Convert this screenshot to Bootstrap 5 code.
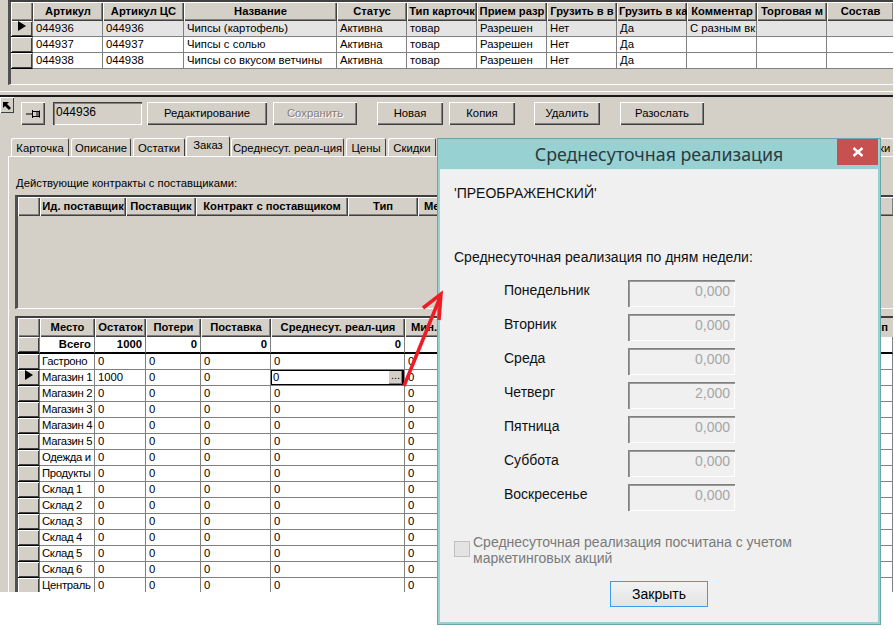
<!DOCTYPE html>
<html lang="ru">
<head>
  <meta charset="utf-8">
  <title>Среднесуточная реализация</title>
  <link href="https://cdn.jsdelivr.net/npm/bootstrap@5.3.0/dist/css/bootstrap.min.css" rel="stylesheet">
  <style>
    html, body { height: 629px; overflow: hidden; background: #fff; }
    body { position: relative; font-family: "Liberation Sans", Arial, sans-serif; font-size: 11.3px; color: #000; }
    .app-win { width: 893px; height: 592px; background: #d4d0c8; overflow: hidden; }

    /* grids */
    .grid-frame { overflow: hidden; border-top: 2px solid #404040; border-left: 3px solid #505050; border-bottom: 1px solid #fff; }
    .frame-top { height: 85px; margin-left: 8px; }
    .frame-contracts { height: 114px; margin: 0 0 0 6px; }
    .frame-stock { height: 276px; margin: 7px 0 0 6px; border-bottom: 0; }
    .table.dbgrid { table-layout: fixed; width: auto; border-collapse: separate; border-spacing: 0; margin: 0; --bs-table-bg: transparent; }
    .table.dbgrid th, .table.dbgrid td { padding: 0 0 0 3px; height: 16px; line-height: 15px; font-size: 11.3px; white-space: nowrap; overflow: hidden; color: #000; border: 0; }
    .table.dbgrid td { background: #fff; border-right: 1px solid #808080; border-bottom: 1px solid #808080; }
    .table.dbgrid th { height: 19px; padding: 0 2px 2px; font-size: 11.2px; background: #d4d0c8; text-align: center; font-weight: 700; box-shadow: inset 1px 1px 0 #fff, inset -1px -1px 0 #404040, inset -2px -2px 0 #808080; }
    .table.dbgrid td.ind-cell { background: #d4d0c8; padding: 0; box-shadow: inset 1px 1px 0 #fff, inset -1px -1px 0 #404040; border: 0; border-bottom: 1px solid #000; border-right: 1px solid #808080; }
    .table.dbgrid td.place-cell { padding-left: 2px; letter-spacing: -.3px; }
    .table.dbgrid tr.row-cur td:not(.ind-cell) { background: #e4e4e4; }
    .table.dbgrid tr.row-sum td { height: 17px; font-weight: 700; text-align: right; padding-right: 3px; border-bottom: 2px solid #000; }
    .table.dbgrid th.head-left { text-align: left; padding-left: 6px; }
    .table.dbgrid th.head-end { text-align: right; padding-right: 5px; box-shadow: none; }
    .cur-mark { display: block; width: 0; height: 0; margin: 0 0 0 7px; border-left: 8px solid #000; border-top: 5px solid transparent; border-bottom: 5px solid transparent; }
    .table.dbgrid td.edit-cell { padding: 0; }
    .edit-box { height: 15px; border: 1px solid #000; border-width: 1px 2px 1px 1px; padding-left: 1px; line-height: 13px; }
    .edit-dots { width: 13px; height: 13px; background: #d4d0c8; line-height: 9px; text-align: center; font-size: 11px; box-shadow: inset -1px -1px 0 #808080; }

    /* splitter + toolbar */
    .split-bar { height: 12px; border-bottom: 2px solid #1a1a1a; }
    .split-bar > div { height: 7px; border-bottom: 1px solid #fff; }
    .tool-row { height: 39px; }
    .btn.win-btn { height: 23px; padding: 0; background: #d4d0c8; border: 0; border-radius: 0; color: #000; font-size: 11.3px; line-height: 21px; box-shadow: inset 1px 1px 0 #fff, inset -1px -1px 0 #404040, inset -2px -2px 0 #808080; }
    .btn.win-btn:disabled { opacity: 1; color: #808080; text-shadow: 1px 1px 0 #fff; background: #d4d0c8; }
    .corner-btn { width: 14px; height: 16px; padding-left: 2px; box-shadow: inset 1px 1px 0 #fff, inset -1px -1px 0 #404040; }
    .btn.b-pin { width: 24px; margin: 5px 0 0 7px; }
    .id-field { width: 89px; height: 23px; margin: 5px 0 0 8px; padding: 3px 0 0 3px; line-height: 15px; font-size: 12px; box-shadow: inset 1px 1px 0 #404040, inset 2px 2px 0 #808080, inset -1px -1px 0 #fff; }
    .btn.b-edit { width: 120px; margin: 5px 0 0 5px; }
    .btn.b-save { width: 84px; margin: 5px 0 0 6px; }
    .btn.b-new { width: 66px; margin: 5px 0 0 20px; }
    .btn.b-copy { width: 66px; margin: 5px 0 0 6px; }
    .btn.b-del { width: 66px; margin: 5px 0 0 19px; }
    .btn.b-send { width: 84px; margin: 5px 0 0 20px; }

    /* tabs */
    .nav.tab-strip { height: 20px; padding-left: 11px; flex-wrap: nowrap; align-items: flex-end; gap: 2px; }
    .tab-item { height: 18px; padding: 3px 0 0; text-align: center; line-height: 15px; color: #000; white-space: nowrap; box-shadow: inset 1px 1px 0 #fff, inset -1px 0 0 #404040; border-radius: 2px 2px 0 0; }
    .tab-item.tab-on { height: 20px; padding-top: 2px; margin: 0 -1px 0 -1px; }
    .tab-w1 { width: 58px; } .tab-w2 { width: 60px; } .tab-w3 { width: 52px; } .tab-w4 { width: 44px; }
    .tab-w5 { width: 113px; } .tab-w6 { width: 40px; } .tab-w7 { width: 48px; }
    .tab-tail { width: 14px; margin-left: auto; text-align: left; box-shadow: inset 0 1px 0 #fff; }
    .tab-page { height: 436px; margin-left: 8px; border-top: 1px solid #fff; border-left: 1px solid #fff; }
    .page-title { height: 38px; padding: 18px 0 0 7px; line-height: 16px; }

    /* dialog */
    .dlg-win { position: absolute; left: 437px; top: 138px; width: 444px; height: 487px; background: #97d1d2; border: 1px solid #6aa6a8; font-family: "Liberation Sans", Arial, sans-serif; }
    .dlg-head { height: 30px; font-family: "Noto Sans", sans-serif; font-size: 17.8px; line-height: 30px; text-align: center; color: #2b3b40; }
    .dlg-close { position: absolute; right: 2px; top: 0; width: 41px; height: 26px; background: #c75050; }
    .dlg-close svg { display: block; margin: 8px auto 0; }
    .dlg-body { height: 453px; margin: 0 2px 0 2px; background: #f0f0f0; border-top: 1px solid #dff0f0; padding: 15px 0 0 14px; font-size: 14px; line-height: 16px; color: #111; }
    .dlg-sub { margin-top: 48px; margin-bottom: 15px; }
    .day-row { height: 34px; padding-left: 50px; }
    .day-name { width: 124px; padding-top: 2px; }
    .day-val { width: 107px; height: 27px; padding: 3px 5px 0 0; text-align: right; color: #a6a6a6; box-shadow: inset 1px 1px 0 #808080, inset 2px 2px 0 #9a9a9a, inset -1px -1px 0 #fff; }
    .promo-row { margin-top: 16px; color: #7a7a7a; }
    .promo-box { width: 16px; height: 16px; margin: 7px 3px 0 0; background: #e3e3e3; border: 1px solid #c0c0c0; flex: none; }
    .close-line { padding-right: 14px; }
    .btn.close-btn { width: 98px; height: 26px; padding: 0; margin-top: 15px; border: 1px solid #3c9cf0; border-radius: 0; background: linear-gradient(#f2f2f2, #e4e4e4); color: #000; font-size: 14px; line-height: 24px; }
    .note-arrow { position: absolute; left: 395px; top: 285px; pointer-events: none; }
  </style>
</head>
<body>
  <div class="app-win">
    <div class="grid-frame frame-top" id="grid-top"></div>
    <div class="split-bar"><div></div></div>

    <div class="tool-row d-flex align-items-start">
      <div class="corner-btn">
        <svg width="10" height="10" viewBox="0 0 10 10"><path d="M1 1h6L5 3l4 4-2 2-4-4-2 2z" fill="#000"/></svg>
      </div>
      <button class="btn win-btn b-pin d-flex align-items-center justify-content-center">
        <svg width="16" height="12" viewBox="0 0 16 12"><path d="M1 6h6M7.500 2v8M8 3.500h6v5H8M12 3.500v5M14.500 2.500v7" fill="none" stroke="#000"/></svg>
      </button>
      <div class="id-field">044936</div>
      <button class="btn win-btn b-edit">Редактирование</button>
      <button class="btn win-btn b-save" disabled>Сохранить</button>
      <button class="btn win-btn b-new">Новая</button>
      <button class="btn win-btn b-copy">Копия</button>
      <button class="btn win-btn b-del">Удалить</button>
      <button class="btn win-btn b-send">Разослать</button>
    </div>

    <ul class="nav tab-strip">
      <li class="tab-item tab-w1">Карточка</li>
      <li class="tab-item tab-w2">Описание</li>
      <li class="tab-item tab-w3">Остатки</li>
      <li class="tab-item tab-w4 tab-on">Заказ</li>
      <li class="tab-item tab-w5">Среднесут. реал-ция</li>
      <li class="tab-item tab-w6">Цены</li>
      <li class="tab-item tab-w7">Скидки</li>
      <li class="tab-item tab-tail">ки</li>
    </ul>

    <div class="tab-page">
      <div class="page-title">Действующие контракты с поставщиками:</div>
      <div class="grid-frame frame-contracts" id="grid-contracts"></div>
      <div class="grid-frame frame-stock" id="grid-stock"></div>
    </div>
  </div>

  <div class="dlg-win">
    <div class="dlg-head">Среднесуточная реализация</div>
    <div class="dlg-close">
      <svg width="12" height="10" viewBox="0 0 12 10"><path d="M1.500 1l9 8M10.500 1l-9 8" stroke="#fff" stroke-width="2.400" fill="none"/></svg>
    </div>
    <div class="dlg-body">
      <div>'ПРЕОБРАЖЕНСКИЙ'</div>
      <div class="dlg-sub">Среднесуточная реализация по дням недели:</div>
      <div id="day-list"></div>
      <div class="promo-row d-flex">
        <div class="promo-box"></div>
        <div>Среднесуточная реализация посчитана с учетом<br>маркетинговых акций</div>
      </div>
      <div class="d-flex justify-content-center close-line">
        <button class="btn close-btn">Закрыть</button>
      </div>
    </div>
  </div>

  <svg class="note-arrow" width="60" height="110" viewBox="395 285 60 110">
    <path d="M404 386L441 295M423 308L441 294L439 320" fill="none" stroke="#ee1c25" stroke-width="3.500"/>
  </svg>

  <script src="https://cdn.jsdelivr.net/npm/bootstrap@5.3.0/dist/js/bootstrap.bundle.min.js"></script>
  <script>
    // column widths in px, first one is the row indicator
    function buildGrid(id, widths, headers, rowsHtml) {
      const cols = widths.map(w => `<col style="width:${w}px">`).join('');
      const total = widths.reduce((a, b) => a + b, 0);
      document.getElementById(id).innerHTML =
        `<table class="table dbgrid" style="width:${total}px"><colgroup>${cols}</colgroup>
         <thead><tr>${headers.join('')}</tr></thead><tbody>${rowsHtml}</tbody></table>`;
    }
    const th = t => `<th>${t}</th>`;
    const indCell = cur => `<td class="ind-cell">${cur ? '<span class="cur-mark"></span>' : ''}</td>`;

    // top grid: goods
    const goods = [
      ['044936', 'Чипсы (картофель)', 'С разным вк'],
      ['044937', 'Чипсы с солью', ''],
      ['044938', 'Чипсы со вкусом ветчины', '']
    ];
    const goodsRows = goods.map((g, i) => `<tr class="${i === 0 ? 'row-cur' : ''}">${indCell(i === 0)}
      <td>${g[0]}</td><td>${g[0]}</td><td>${g[1]}</td><td>Активна</td><td>товар</td><td>Разрешен</td>
      <td>Нет</td><td>Да</td><td>${g[2]}</td><td></td><td></td></tr>`).join('');
    buildGrid('grid-top', [22, 70, 81, 153, 70, 70, 70, 70, 70, 70, 70, 67],
      ['', 'Артикул', 'Артикул ЦС', 'Название', 'Статус', 'Тип карточк', 'Прием разр', 'Грузить в в', 'Грузить в ка', 'Комментар', 'Торговая м', 'Состав'].map(th),
      goodsRows);

    // contracts grid is empty
    buildGrid('grid-contracts', [22, 86, 70, 152, 70, 476],
      ['', 'Ид. поставщик', 'Поставщик', 'Контракт с поставщиком', 'Тип'].map(th).concat('<th class="head-left">Ме</th>'),
      '');

    // stock grid
    const places = ['Гастроно', 'Магазин 1', 'Магазин 2', 'Магазин 3', 'Магазин 4', 'Магазин 5', 'Одежда и', 'Продукты',
      'Склад 1', 'Склад 2', 'Склад 3', 'Склад 4', 'Склад 5', 'Склад 6', 'Централь'];
    let stockRows = `<tr class="row-sum">${indCell(false)}<td>Всего</td><td>1000</td><td>0</td><td>0</td><td>0</td><td></td><td></td></tr>`;
    places.forEach((p, i) => {
      const cur = i === 1;
      const edit = cur
        ? '<td class="edit-cell"><div class="edit-box d-flex justify-content-between">0<div class="edit-dots">...</div></div></td>'
        : '<td>0</td>';
      stockRows += `<tr>${indCell(cur)}<td class="place-cell">${p}</td><td>${cur ? 1000 : 0}</td><td>0</td><td>0</td>${edit}<td>0</td><td></td></tr>`;
    });
    buildGrid('grid-stock', [22, 55, 51, 55, 70, 134, 70, 418],
      [th(''), th('Место'), th('Остаток'), th('Потери'), th('Поставка'), th('Среднесут. реал-ция'), '<th class="head-left">Мин.</th>', '<th class="head-end">п</th>'],
      stockRows);

    // dialog: days of week
    const days = [['Понедельник', '0,000'], ['Вторник', '0,000'], ['Среда', '0,000'], ['Четверг', '2,000'],
      ['Пятница', '0,000'], ['Суббота', '0,000'], ['Воскресенье', '0,000']];
    document.getElementById('day-list').innerHTML = days.map(d =>
      `<div class="day-row d-flex"><div class="day-name">${d[0]}</div><div class="day-val">${d[1]}</div></div>`).join('');
  </script>
</body>
</html>
